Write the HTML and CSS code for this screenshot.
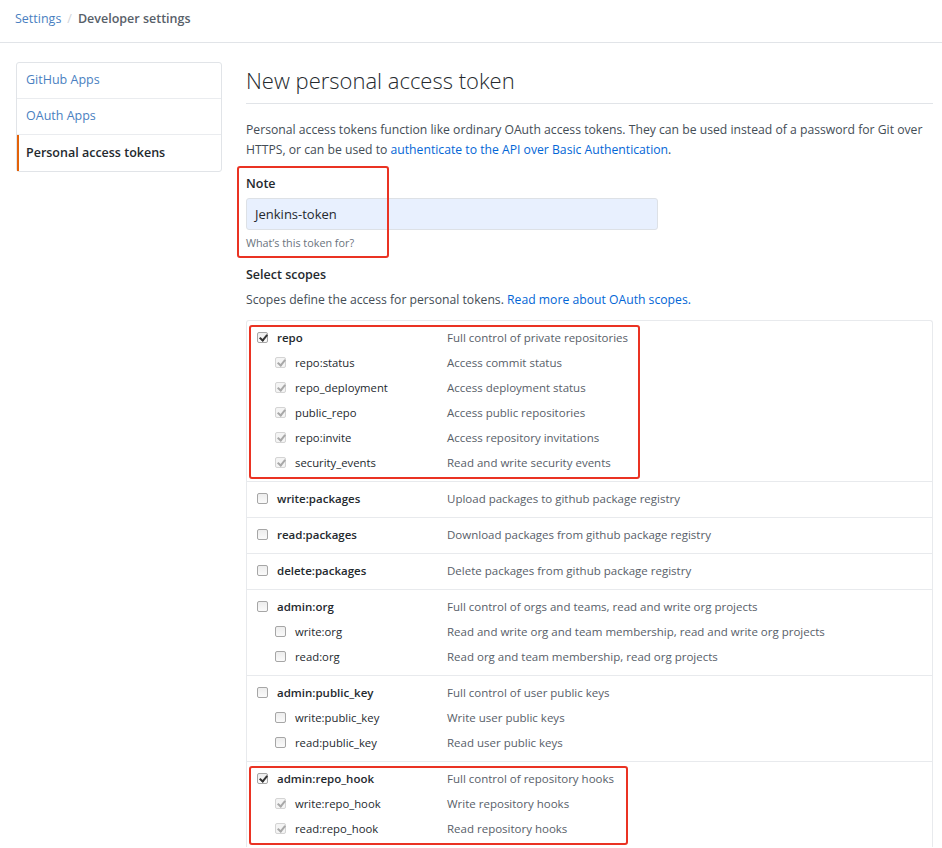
FILE: index.html
```html
<!DOCTYPE html>
<html lang="en">
<head>
<meta charset="utf-8">
<title>New personal access token</title>
<link rel="stylesheet" href="styles.css">
</head>
<body>
<header class="crumbs">
  <a class="crumb-link" href="#">Settings</a>
  <span class="crumb-sep">/</span>
  <span class="crumb-current">Developer settings</span>
</header>
<div class="layout">
  <nav class="menu">
    <a class="menu-item" href="#">GitHub Apps</a>
    <a class="menu-item" href="#">OAuth Apps</a>
    <a class="menu-item selected" href="#">Personal access tokens</a>
  </nav>
  <main class="content">
    <h1 class="title">New personal access token</h1>
    <p class="lead">Personal access tokens function like ordinary OAuth access tokens. They can be used instead of a password for Git over HTTPS, or can be used to <a href="#">authenticate to the API over Basic Authentication</a>.</p>

    <div class="note-group">
      <label class="field-label">Note</label>
      <div class="text-input">Jenkins-token</div>
      <p class="hint">What’s this token for?</p>
    </div>

    <h3 class="section-label">Select scopes</h3>
    <p class="section-text">Scopes define the access for personal tokens. <a href="#">Read more about OAuth scopes.</a></p>

    <div class="scopes">
      <div class="group marked marked-repo">
        <div class="row"><span class="name top"><span class="cb on"></span>repo</span><span class="desc">Full control of private repositories</span></div>
        <div class="row"><span class="name sub"><span class="cb dis"></span>repo:status</span><span class="desc">Access commit status</span></div>
        <div class="row"><span class="name sub"><span class="cb dis"></span>repo_deployment</span><span class="desc">Access deployment status</span></div>
        <div class="row"><span class="name sub"><span class="cb dis"></span>public_repo</span><span class="desc">Access public repositories</span></div>
        <div class="row"><span class="name sub"><span class="cb dis"></span>repo:invite</span><span class="desc">Access repository invitations</span></div>
        <div class="row"><span class="name sub"><span class="cb dis"></span>security_events</span><span class="desc">Read and write security events</span></div>
      </div>
      <div class="group">
        <div class="row"><span class="name top"><span class="cb"></span>write:packages</span><span class="desc">Upload packages to github package registry</span></div>
      </div>
      <div class="group">
        <div class="row"><span class="name top"><span class="cb"></span>read:packages</span><span class="desc">Download packages from github package registry</span></div>
      </div>
      <div class="group">
        <div class="row"><span class="name top"><span class="cb"></span>delete:packages</span><span class="desc">Delete packages from github package registry</span></div>
      </div>
      <div class="group">
        <div class="row"><span class="name top"><span class="cb"></span>admin:org</span><span class="desc">Full control of orgs and teams, read and write org projects</span></div>
        <div class="row"><span class="name sub"><span class="cb"></span>write:org</span><span class="desc">Read and write org and team membership, read and write org projects</span></div>
        <div class="row"><span class="name sub"><span class="cb"></span>read:org</span><span class="desc">Read org and team membership, read org projects</span></div>
      </div>
      <div class="group">
        <div class="row"><span class="name top"><span class="cb"></span>admin:public_key</span><span class="desc">Full control of user public keys</span></div>
        <div class="row"><span class="name sub"><span class="cb"></span>write:public_key</span><span class="desc">Write user public keys</span></div>
        <div class="row"><span class="name sub"><span class="cb"></span>read:public_key</span><span class="desc">Read user public keys</span></div>
      </div>
      <div class="group marked marked-hook">
        <div class="row"><span class="name top"><span class="cb on"></span>admin:repo_hook</span><span class="desc">Full control of repository hooks</span></div>
        <div class="row"><span class="name sub"><span class="cb dis"></span>write:repo_hook</span><span class="desc">Write repository hooks</span></div>
        <div class="row"><span class="name sub"><span class="cb dis"></span>read:repo_hook</span><span class="desc">Read repository hooks</span></div>
      </div>
    </div>
  </main>
</div>
</body>
</html>
```
FILE: styles.css
```css
* { box-sizing: border-box; }
html, body { margin: 0; padding: 0; background: #fff; }
body {
  font-family: "Open Sans", "Noto Sans", "Liberation Sans", sans-serif;
  font-size: 12.5px;
  line-height: 20px;
  color: #24292e;
}
a { color: #0366d6; text-decoration: none; }

.crumbs {
  height: 43px;
  border-bottom: 1px solid #e1e4e8;
  padding: 0 15px 4px;
  display: flex;
  align-items: center;
  gap: 6px;
  font-size: 12.5px;
}
.crumb-link { color: #4a7fc1; }
.crumb-sep { color: #d1d5da; }
.crumb-current { color: #586069; font-weight: 600; }

.layout {
  display: flex;
  padding: 19px 9px 0 16px;
  gap: 24px;
}
.menu {
  width: 206px;
  flex: none;
  align-self: flex-start;
  border: 1px solid #e1e4e8;
  border-radius: 3px;
  display: flex;
  flex-direction: column;
}
.menu-item {
  height: 36px;
  display: flex;
  align-items: center;
  padding: 0 0 1px 9px;
  color: #4a7fc1;
  border-bottom: 1px solid #eaecef;
}
.menu-item:last-child { border-bottom: 0; }
.menu-item.selected {
  color: #24292e;
  font-weight: 600;
  border-left: 2px solid #e36209;
  padding-left: 7px;
}

.content { flex: 1; min-width: 0; }
.title {
  margin: 0;
  font-size: 22px;
  font-weight: 300;
  line-height: 36px;
  padding-bottom: 5px;
  border-bottom: 1px solid #e1e4e8;
  color: #24292e;
}
.lead { margin: 16px -8px 0 0; font-size: 12.2px; color: #444d56; }

.note-group { position: relative; margin-top: 14px; }
.note-group::after {
  content: "";
  position: absolute;
  left: -9px;
  top: -8px;
  width: 148px;
  height: 88px;
  border: 2px solid #ea3323;
  border-radius: 3px;
}
.field-label { display: block; font-weight: 600; }
.text-input {
  margin-top: 4px;
  width: 412px;
  height: 32px;
  border: 1px solid #dde1e6;
  border-radius: 3px;
  background: #e8f0fe;
  padding: 0 8px;
  display: flex;
  align-items: center;
  font-size: 13px;
}
.hint { margin: 4px 0 0; font-size: 10.8px; line-height: 18px; color: #6a737d; }

.section-label { margin: 13px 0 0; font-size: 12.5px; font-weight: 600; line-height: 20px; }
.section-text { margin: 5px 0 0; font-size: 12.2px; color: #444d56; }

.scopes {
  margin-top: 10px;
  border: 1px solid #e8eaed;
  border-bottom: 0;
  border-radius: 3px 3px 0 0;
  font-size: 11.5px;
}
.group {
  padding: 4px 0 6px;
  border-top: 1px solid #e8eaed;
  position: relative;
}
.group:first-child { border-top: 0; }
.row { display: flex; align-items: center; height: 25px; padding-left: 10px; }
.name { width: 190px; flex: none; display: flex; align-items: center; gap: 9px; color: #24292e; }
.name.top { font-weight: 600; }
.name.sub { padding-left: 18px; font-size: 11.3px; }
.desc { color: #586069; }

.marked::after {
  content: "";
  position: absolute;
  left: 2px;
  border: 2px solid #ea3323;
  border-radius: 3px;
  pointer-events: none;
}
.marked-repo::after { top: 4px; width: 387px; height: 150px; }
.marked-hook::after { top: 4px; width: 375px; height: 75px; }

.cb {
  width: 11px;
  height: 11px;
  flex: none;
  border: 1px solid #a6a6a6;
  border-radius: 2px;
  background: linear-gradient(#ededed, #fafafa);
  position: relative;
}
.cb.on::after,
.cb.dis::after {
  content: "";
  position: absolute;
  left: 3px;
  top: 0px;
  width: 3px;
  height: 6px;
  border: solid #333;
  border-width: 0 2px 2px 0;
  transform: rotate(40deg);
}
.cb.dis { border-color: #d4d4d4; background: #f4f4f4; }
.cb.dis::after { border-color: #a8a8a8; }
```
